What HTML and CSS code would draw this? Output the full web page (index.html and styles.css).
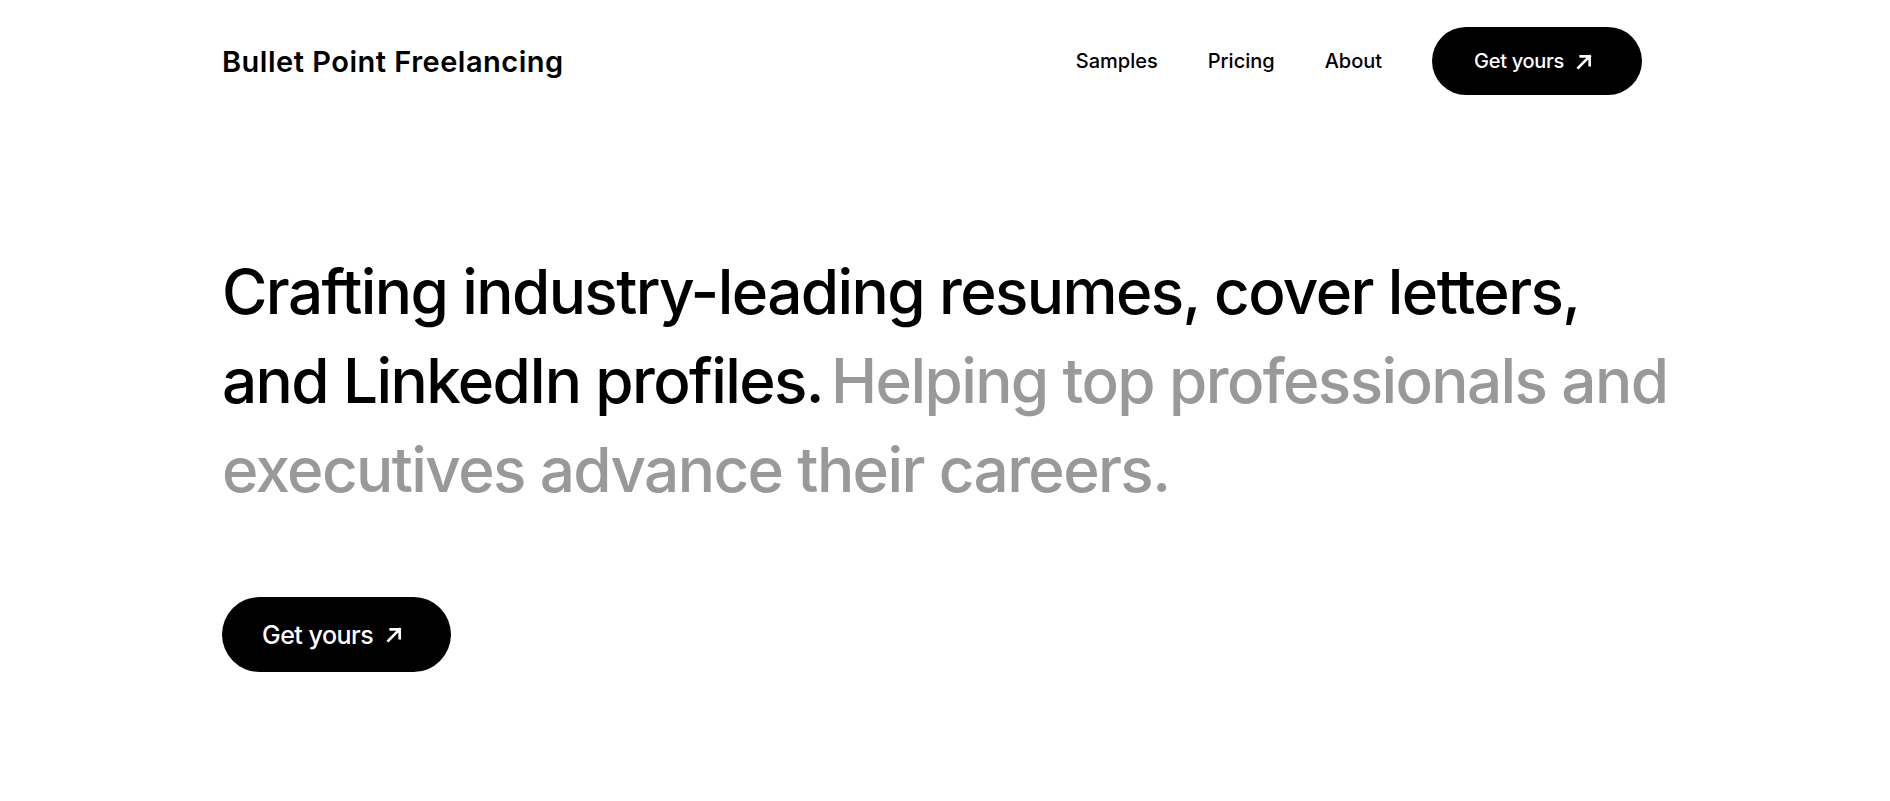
FILE: index.html
```html
<!DOCTYPE html>
<html lang="en">
<head>
<meta charset="utf-8">
<title>Bullet Point Freelancing</title>
<link rel="stylesheet" href="styles.css">
</head>
<body>
<header class="header">
  <a class="logo" href="#">Bullet Point Freelancing</a>
  <nav class="nav">
    <a class="nav-link" href="#">Samples</a>
    <a class="nav-link" href="#">Pricing</a>
    <a class="nav-link" href="#">About</a>
    <a class="btn btn-nav" href="#">Get yours
      <svg class="arrow" viewBox="0 0 18 18" aria-hidden="true"><path d="M2.5 15.5 L14.5 3.5 M5 3.5 H14.5 V13"/></svg>
    </a>
  </nav>
</header>
<main class="hero">
  <h1 class="hero-title"><span class="lead">Crafting industry-leading resumes, cover letters, and LinkedIn profiles.</span><span class="muted">Helping top professionals and executives advance their careers.</span></h1>
  <a class="btn btn-hero" href="#">Get yours
    <svg class="arrow" viewBox="0 0 18 18" aria-hidden="true"><path d="M2.5 15.5 L14.5 3.5 M5 3.5 H14.5 V13"/></svg>
  </a>
</main>
</body>
</html>
```
FILE: styles.css
```css
* { box-sizing: border-box; }
html, body { margin: 0; padding: 0; background: #fff; }
body {
  font-family: Inter, "Noto Sans", sans-serif;
  color: #000;
}
a { text-decoration: none; color: inherit; }

.header {
  display: flex;
  align-items: center;
  justify-content: space-between;
  padding: 27px 248px 0 222px;
}
.logo {
  font-size: 29px;
  font-weight: 600;
  letter-spacing: 0.5px;
}
.nav {
  display: flex;
  align-items: center;
  gap: 50px;
}
.nav-link {
  font-size: 20px;
  font-weight: 500;
  letter-spacing: 0;
}
.btn {
  display: inline-flex;
  align-items: center;
  background: #000;
  color: #fff;
  border-radius: 999px;
  font-weight: 500;
}
.btn-nav {
  height: 68px;
  padding: 0 49px 0 42px;
  gap: 12px;
  font-size: 20px;
  letter-spacing: -0.3px;
}
.arrow {
  width: 17px;
  height: 17px;
  fill: none;
  stroke: currentColor;
  stroke-width: 2.8;
  stroke-linecap: square;
}
.hero {
  padding: 152px 0 0 222px;
}
.hero-title {
  margin: 0;
  width: 1468px;
  font-size: 62px;
  line-height: 89px;
  font-weight: 500;
  letter-spacing: -1.6px;
}
.lead { color: #000; }
.muted {
  color: #999;
  margin-left: 8px;
}
.btn-hero {
  margin-top: 83px;
  height: 75px;
  padding: 0 48px 0 40px;
  gap: 13px;
  font-size: 25px;
  letter-spacing: -0.5px;
}
```
